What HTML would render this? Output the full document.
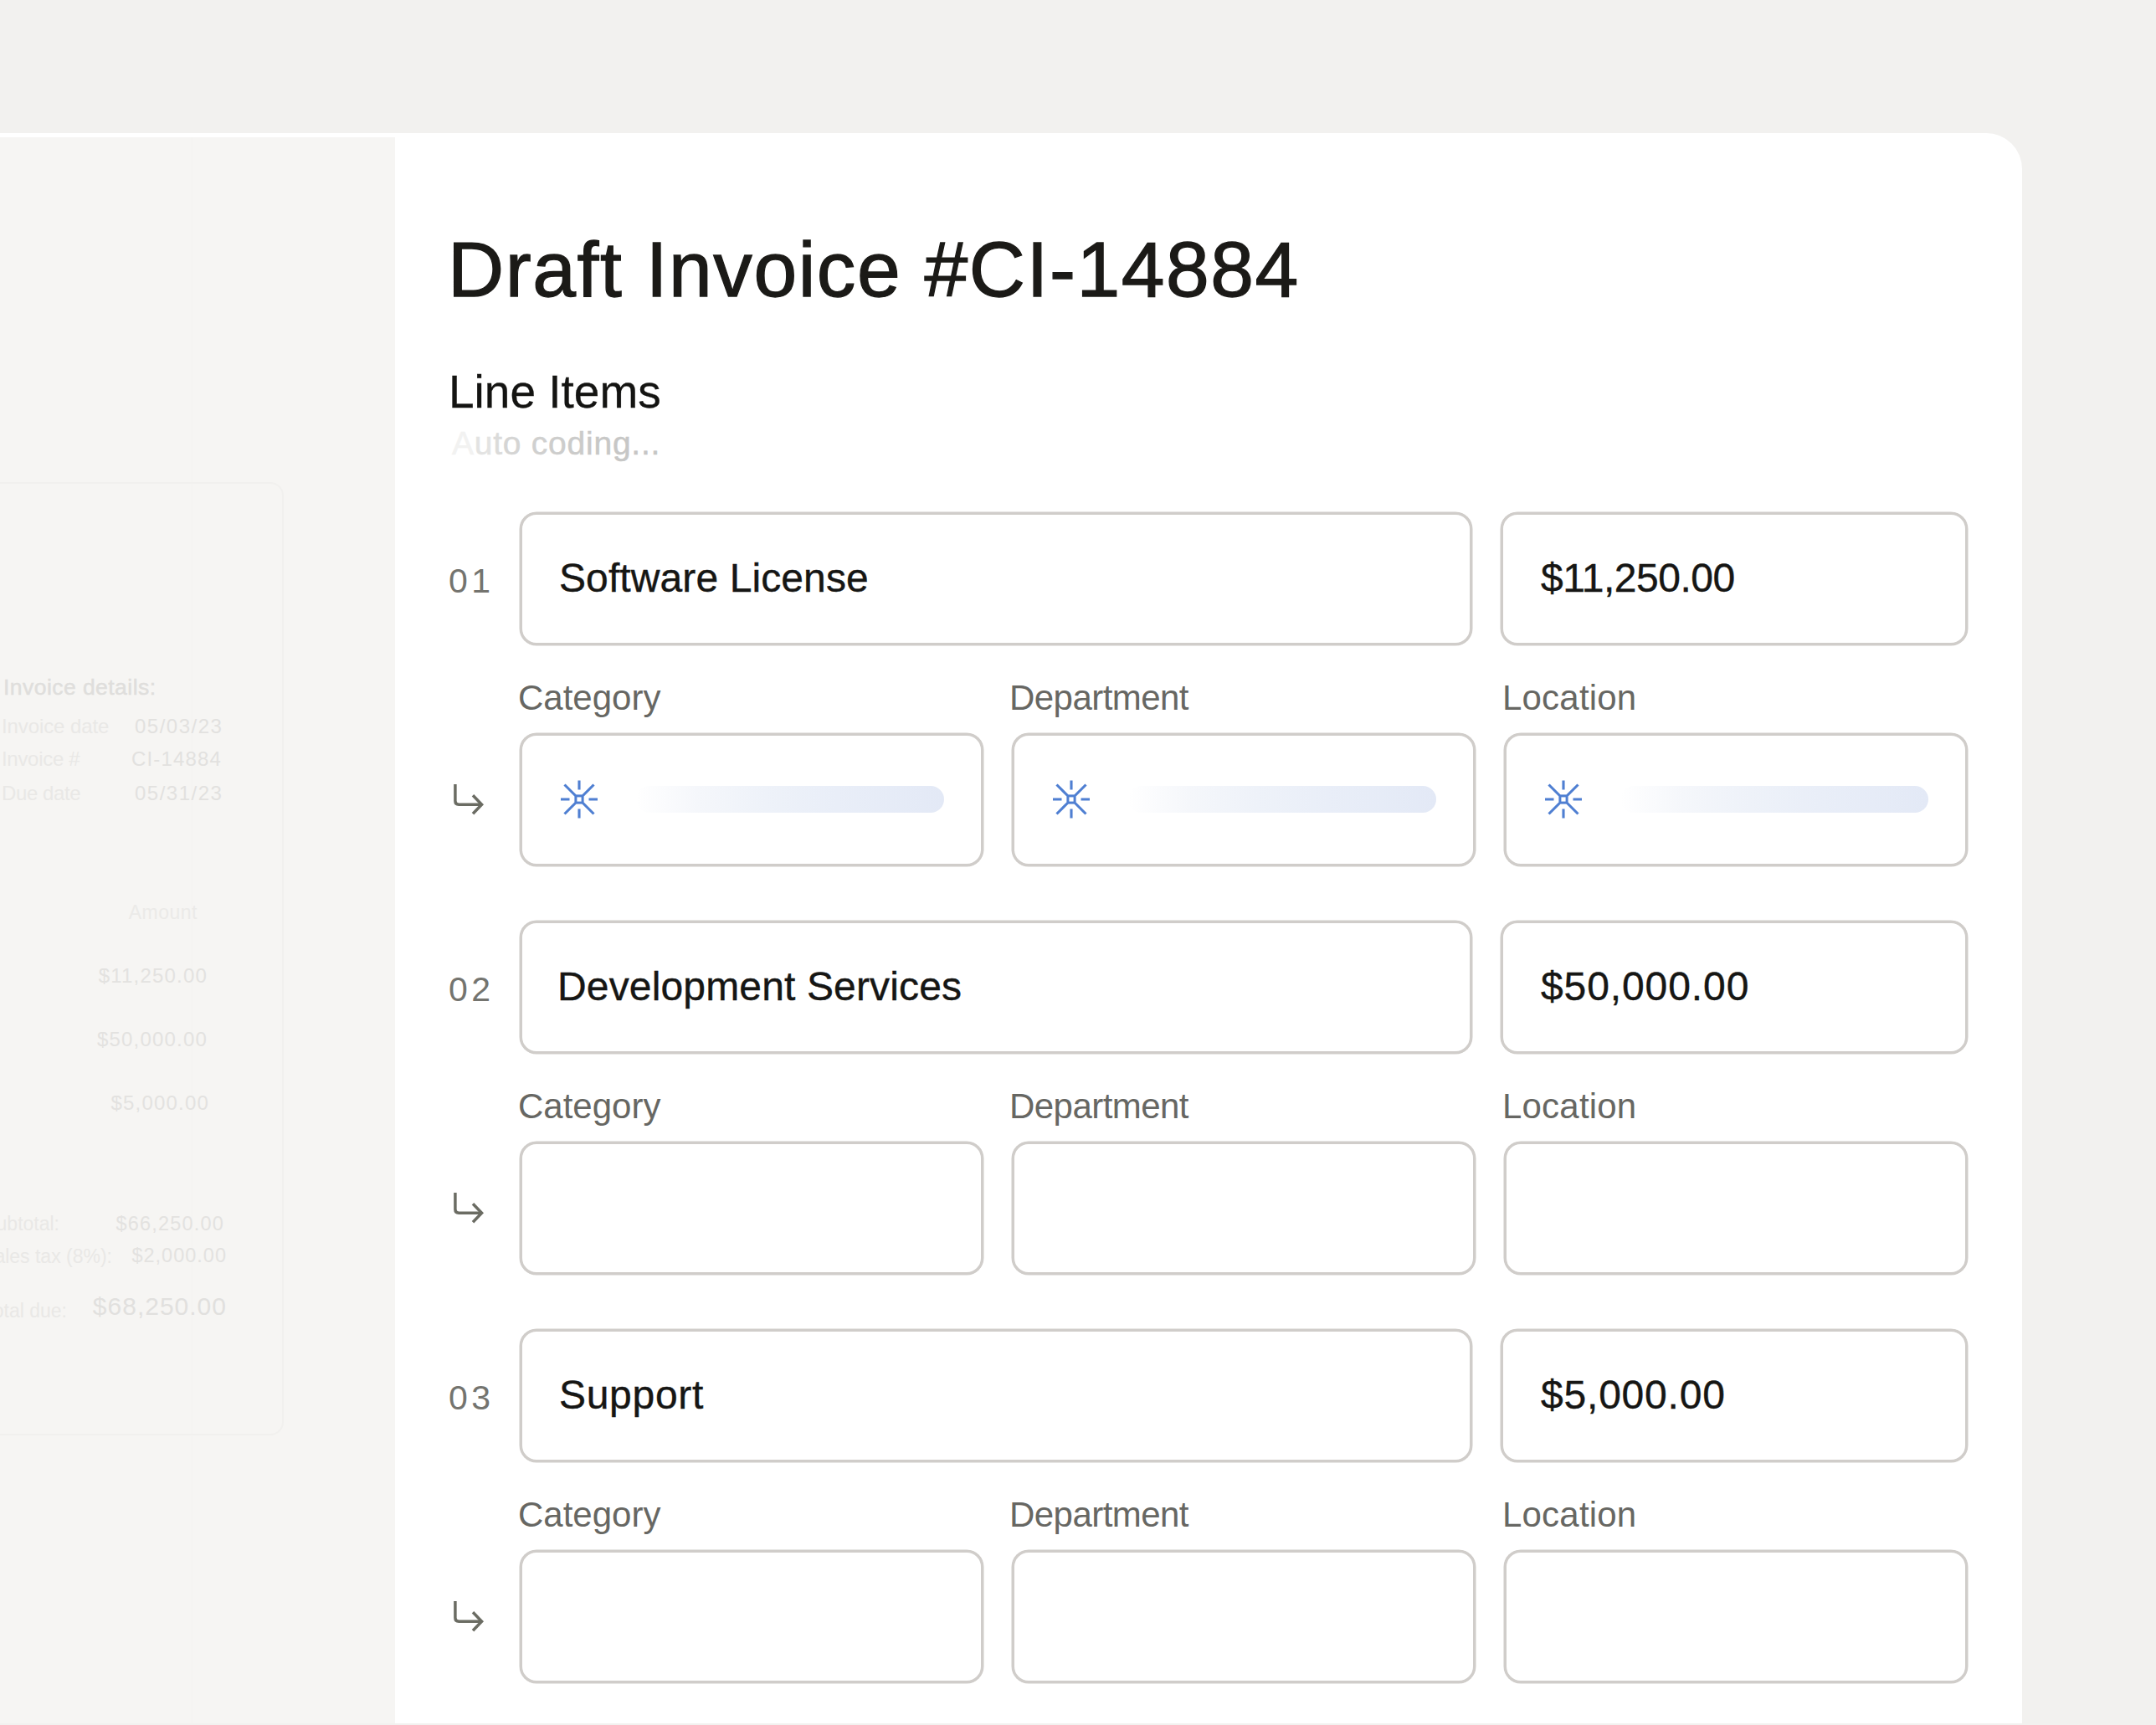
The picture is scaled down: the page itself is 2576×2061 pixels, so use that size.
<!DOCTYPE html>
<html><head><meta charset="utf-8">
<style>
html,body{margin:0;padding:0;}
body{width:2576px;height:2061px;overflow:hidden;position:relative;background:#f2f1ef;font-family:"Liberation Sans",sans-serif;}
#card{position:absolute;left:-100px;top:159px;width:2516px;height:1900px;background:#fff;border-top-right-radius:43px;}
#ghost{position:absolute;left:0;top:164px;width:472px;height:1897px;background:#f6f5f3;overflow:hidden;}
.g{position:absolute;white-space:nowrap;line-height:1;}
#doc{position:absolute;left:-60px;top:412px;width:399px;height:1139px;box-sizing:border-box;border:2px solid #f1f0ee;border-radius:16px;}
#vline{position:absolute;left:229px;top:0;width:1px;height:1897px;background:#f4f3f1;}
.box{position:absolute;box-sizing:border-box;border:3px solid #d0cdca;border-radius:20px;background:#fff;height:159px;box-shadow:0 0 0 0.5px #d0cdca;}
.t{position:absolute;white-space:nowrap;line-height:1;}
.title{font-size:93px;color:#1b1a17;letter-spacing:1.55px;-webkit-text-stroke:1.3px #1b1a17;}
.h2{font-size:55px;color:#141412;-webkit-text-stroke:0.3px #141412;}
.auto{font-size:39px;letter-spacing:0.75px;}
.auto span{-webkit-text-stroke:0.5px currentColor;}
.num{font-size:41px;color:#74746f;letter-spacing:4.5px;}
.val{font-size:48px;color:#161614;-webkit-text-stroke:0.4px #161614;}
.lab{font-size:42px;color:#676763;}
.bar{position:absolute;height:32px;border-radius:16px;background:linear-gradient(90deg,rgba(240,244,250,0) 0%,#f5f7fb 20%,#eef2f9 42%,#e9eef8 65%,#e3e9f6 100%);}
.spk{position:absolute;width:48px;height:48px;}
.arr{position:absolute;width:40px;height:40px;}
#bottomline{position:absolute;left:0;top:2059px;width:2576px;height:2px;background:#f2f1ef;}
</style></head>
<body>
<div id="card"></div>
<div id="ghost"><div id="vline"></div><div id="doc"></div><div class="g" style="left:4px;top:643.6px;font-size:26.5px;color:#dfdedc;letter-spacing:0.45px;font-weight:400;-webkit-text-stroke:0.5px #dfdedc">Invoice details:</div><div class="g" style="left:2px;top:691.7px;font-size:24px;color:#e9e8e6;letter-spacing:-0.1px;font-weight:400">Invoice date</div><div class="g" style="left:161px;top:691.7px;font-size:24px;color:#e2e1df;letter-spacing:1.5px;font-weight:400">05/03/23</div><div class="g" style="left:2px;top:730.7px;font-size:24px;color:#e9e8e6;letter-spacing:-0.3px;font-weight:400">Invoice #</div><div class="g" style="left:157px;top:730.7px;font-size:24px;color:#e2e1df;letter-spacing:1.15px;font-weight:400">CI-14884</div><div class="g" style="left:2px;top:771.7px;font-size:24px;color:#e9e8e6;letter-spacing:-0.4px;font-weight:400">Due date</div><div class="g" style="left:161px;top:771.7px;font-size:24px;color:#e2e1df;letter-spacing:1.5px;font-weight:400">05/31/23</div><div class="g" style="right:236px;top:914.5px;font-size:23px;color:#ebeae8;letter-spacing:0.5px;font-weight:400">Amount</div><div class="g" style="right:224px;top:989.7px;font-size:24px;color:#e3e2e0;letter-spacing:1.2px;font-weight:400">$11,250.00</div><div class="g" style="right:224px;top:1065.7px;font-size:24px;color:#e3e2e0;letter-spacing:1.2px;font-weight:400">$50,000.00</div><div class="g" style="right:222px;top:1141.7px;font-size:24px;color:#e3e2e0;letter-spacing:1.2px;font-weight:400">$5,000.00</div><div class="g" style="right:401px;top:1287.0px;font-size:23px;color:#e9e8e6;letter-spacing:0px;font-weight:400">Subtotal:</div><div class="g" style="right:204px;top:1286.6px;font-size:23.5px;color:#e3e2e0;letter-spacing:1.2px;font-weight:400">$66,250.00</div><div class="g" style="right:338px;top:1325.5px;font-size:23px;color:#e9e8e6;letter-spacing:0px;font-weight:400">Sales tax (8%):</div><div class="g" style="right:201px;top:1325.1px;font-size:23.5px;color:#e3e2e0;letter-spacing:1.0px;font-weight:400">$2,000.00</div><div class="g" style="right:392px;top:1390.5px;font-size:23px;color:#e9e8e6;letter-spacing:0px;font-weight:400">Total due:</div><div class="g" style="right:201px;top:1381.6px;font-size:30px;color:#e1e0de;letter-spacing:1.0px;font-weight:400">$68,250.00</div></div>
<div class="t title" style="left:535px;top:275.6px">Draft Invoice #CI-14884</div>
<div class="t h2" style="left:536px;top:441.4px">Line Items</div>
<div class="t auto" style="left:540px;top:510px"><span style="color:#f2f2f1">A</span><span style="color:#e3e3e2">u</span><span style="color:#dbdbda">t</span><span style="color:#d5d5d4">o</span><span style="color:#d5d5d4"> </span><span style="color:#d0d0cf">c</span><span style="color:#cdcdcc">o</span><span style="color:#cbcbca">d</span><span style="color:#c9c9c8">i</span><span style="color:#c8c8c7">n</span><span style="color:#c7c7c6">g</span><span style="color:#c6c6c5">.</span><span style="color:#c6c6c5">.</span><span style="color:#c6c6c5">.</span></div>
<div class="t num" style="left:536px;top:674px">01</div>
<div class="box" style="left:621px;top:612px;width:1138px"></div>
<div class="t val" style="left:668px;top:667px;letter-spacing:0.1px">Software License</div>
<div class="box" style="left:1793px;top:612px;width:558px"></div>
<div class="t val" style="left:1841px;top:667px;letter-spacing:-0.5px">$11,250.00</div>
<div class="t lab" style="left:619px;top:813px;letter-spacing:0px">Category</div>
<div class="t lab" style="left:1206px;top:813px;letter-spacing:-0.55px">Department</div>
<div class="t lab" style="left:1795px;top:813px;letter-spacing:0.2px">Location</div>
<svg class="arr" style="left:538px;top:937px" viewBox="0 0 40 40" fill="none" stroke="#6b6c63" stroke-width="3.5" stroke-linecap="butt" stroke-linejoin="miter">
<path d="M5.9 0V20Q5.9 24.2 10.1 24.2H38"/>
<path d="M27 13.2L37.6 24.2L27 35.2"/>
</svg>
<div class="box" style="left:621px;top:876px;width:554px"></div>
<svg class="spk" style="left:668px;top:931px" viewBox="0 0 48 48" fill="none" stroke="#4f7fd2" stroke-width="3.1" stroke-linecap="butt">
<rect x="19.9" y="19.9" width="8.2" height="8.2" stroke-width="3"/>
<path d="M24 1.5V12.5M24 35.5V46.5M2 24H12.5M35.5 24H46M6.5 6.5L19.5 19.5M41.5 6.5L28.5 19.5M6.5 41.5L19.5 28.5M41.5 41.5L28.5 28.5"/>
</svg>
<div class="bar" style="left:760px;top:939px;width:368px"></div>
<div class="box" style="left:1209px;top:876px;width:554px"></div>
<svg class="spk" style="left:1256px;top:931px" viewBox="0 0 48 48" fill="none" stroke="#4f7fd2" stroke-width="3.1" stroke-linecap="butt">
<rect x="19.9" y="19.9" width="8.2" height="8.2" stroke-width="3"/>
<path d="M24 1.5V12.5M24 35.5V46.5M2 24H12.5M35.5 24H46M6.5 6.5L19.5 19.5M41.5 6.5L28.5 19.5M6.5 41.5L19.5 28.5M41.5 41.5L28.5 28.5"/>
</svg>
<div class="bar" style="left:1348px;top:939px;width:368px"></div>
<div class="box" style="left:1797px;top:876px;width:554px"></div>
<svg class="spk" style="left:1844px;top:931px" viewBox="0 0 48 48" fill="none" stroke="#4f7fd2" stroke-width="3.1" stroke-linecap="butt">
<rect x="19.9" y="19.9" width="8.2" height="8.2" stroke-width="3"/>
<path d="M24 1.5V12.5M24 35.5V46.5M2 24H12.5M35.5 24H46M6.5 6.5L19.5 19.5M41.5 6.5L28.5 19.5M6.5 41.5L19.5 28.5M41.5 41.5L28.5 28.5"/>
</svg>
<div class="bar" style="left:1936px;top:939px;width:368px"></div>
<div class="t num" style="left:536px;top:1162px">02</div>
<div class="box" style="left:621px;top:1100px;width:1138px"></div>
<div class="t val" style="left:666px;top:1155px;letter-spacing:0.15px">Development Services</div>
<div class="box" style="left:1793px;top:1100px;width:558px"></div>
<div class="t val" style="left:1841px;top:1155px;letter-spacing:0.9px">$50,000.00</div>
<div class="t lab" style="left:619px;top:1301px;letter-spacing:0px">Category</div>
<div class="t lab" style="left:1206px;top:1301px;letter-spacing:-0.55px">Department</div>
<div class="t lab" style="left:1795px;top:1301px;letter-spacing:0.2px">Location</div>
<svg class="arr" style="left:538px;top:1425px" viewBox="0 0 40 40" fill="none" stroke="#6b6c63" stroke-width="3.5" stroke-linecap="butt" stroke-linejoin="miter">
<path d="M5.9 0V20Q5.9 24.2 10.1 24.2H38"/>
<path d="M27 13.2L37.6 24.2L27 35.2"/>
</svg>
<div class="box" style="left:621px;top:1364px;width:554px"></div>
<div class="box" style="left:1209px;top:1364px;width:554px"></div>
<div class="box" style="left:1797px;top:1364px;width:554px"></div>
<div class="t num" style="left:536px;top:1650px">03</div>
<div class="box" style="left:621px;top:1588px;width:1138px"></div>
<div class="t val" style="left:668px;top:1643px;letter-spacing:0.7px">Support</div>
<div class="box" style="left:1793px;top:1588px;width:558px"></div>
<div class="t val" style="left:1841px;top:1643px;letter-spacing:0.8px">$5,000.00</div>
<div class="t lab" style="left:619px;top:1789px;letter-spacing:0px">Category</div>
<div class="t lab" style="left:1206px;top:1789px;letter-spacing:-0.55px">Department</div>
<div class="t lab" style="left:1795px;top:1789px;letter-spacing:0.2px">Location</div>
<svg class="arr" style="left:538px;top:1913px" viewBox="0 0 40 40" fill="none" stroke="#6b6c63" stroke-width="3.5" stroke-linecap="butt" stroke-linejoin="miter">
<path d="M5.9 0V20Q5.9 24.2 10.1 24.2H38"/>
<path d="M27 13.2L37.6 24.2L27 35.2"/>
</svg>
<div class="box" style="left:621px;top:1852px;width:554px"></div>
<div class="box" style="left:1209px;top:1852px;width:554px"></div>
<div class="box" style="left:1797px;top:1852px;width:554px"></div>
<div id="bottomline"></div>
</body></html>
